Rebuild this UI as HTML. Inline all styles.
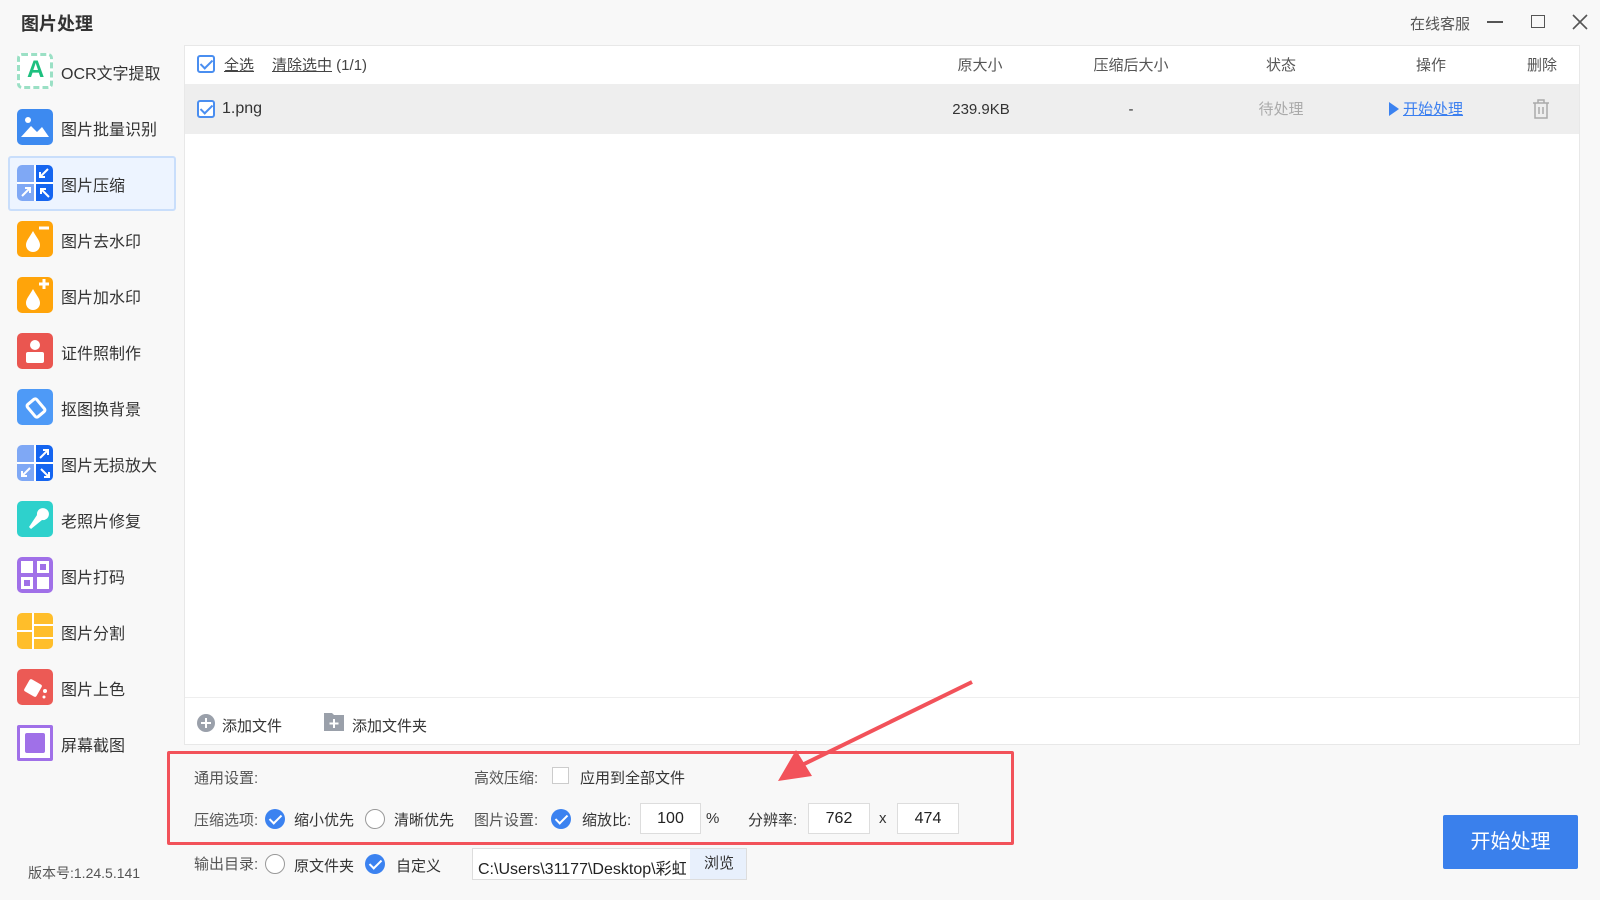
<!DOCTYPE html>
<html><head><meta charset="utf-8"><style>
*{margin:0;padding:0;box-sizing:border-box}
body{width:1600px;height:900px;background:#f8f8f8;font-family:"Liberation Sans","Noto Sans CJK SC",sans-serif;color:#333;position:relative;overflow:hidden}
.a{position:absolute;white-space:nowrap}
.title{left:21px;top:10px;font-size:18px;font-weight:bold;color:#333}
.nav{left:8px;width:168px;height:55px}
.nav .ic{position:absolute;left:9px;top:9px;width:36px;height:36px;border-radius:5px;overflow:hidden}
.nav span{position:absolute;left:53px;top:16px;font-size:16px;color:#333}
.sel{background:#edf4ff;border:2px solid #c9defb;border-radius:3px}
.panel{left:184px;top:45px;width:1396px;height:700px;background:#fff;border:1px solid #e8e8e8}
.hd{font-size:15px;color:#555;top:54px;transform:translateX(-50%)}
.row{left:185px;top:84px;width:1394px;height:50px;background:#eeeeee}
.cb{width:18px;height:18px;border:2px solid #4a8ef0;border-radius:3px;background:#fff}
.cb:after{content:"";position:absolute;left:4px;top:0px;width:5px;height:10px;border:solid #4a8ef0;border-width:0 2px 2px 0;transform:rotate(45deg)}
.rc{width:20px;height:20px;border-radius:50%;background:#3b82f0}
.rc:after{content:"";position:absolute;left:7px;top:3px;width:5px;height:10px;border:solid #fff;border-width:0 2px 2px 0;transform:rotate(45deg)}
.ro{width:20px;height:20px;border-radius:50%;border:1.5px solid #999;background:#fff}
.s{font-size:15px;color:#555}
.t{font-size:15px;color:#333}
.inp{height:31px;border:1px solid #ddd;background:#fff;font-size:16px;text-align:center;line-height:29px;color:#222}
</style></head><body>
<div class="a title">图片处理</div>
<div class="a" style="left:1410px;top:13px;font-size:15px;color:#555">在线客服</div>
<div class="a" style="left:1487px;top:21px;width:16px;height:2px;background:#555"></div>
<div class="a" style="left:1531px;top:15px;width:14px;height:13px;border:1.5px solid #555"></div>
<svg class="a" style="left:1571px;top:13px" width="18" height="18"><path d="M2 2L16 16M16 2L2 16" stroke="#555" stroke-width="1.6"/></svg>

<div class="a nav" style="top:44px"><div class="ic" style="border:3px dashed #9be0c5;background:#fff"></div><div class="a" style="left:19px;top:12px;font-size:24px;font-weight:bold;color:#1ec07f">A</div><span>OCR文字提取</span></div>
<div class="a nav" style="top:100px"><div class="ic" style="background:#3d8af0"><svg width="36" height="36"><path d="M4 28L14 17L20 23L25 18L32 28Z" fill="#fff"/><circle cx="11" cy="11" r="3" fill="#fff"/></svg></div><span>图片批量识别</span></div>
<div class="a nav sel" style="top:156px"><div class="ic" style="left:7px;top:7px;background:#fff"><svg width="36" height="36"><rect width="17" height="17" fill="#7fa8f5"/><rect x="19" width="17" height="17" fill="#1565f0"/><rect y="19" width="17" height="17" fill="#7fa8f5"/><rect x="19" y="19" width="17" height="17" fill="#1565f0"/><path d="M31 4L23 12M23 7V12H28M5 31L13 23M8 23H13V28M24 24L32 32M24 29V24H29" stroke="#fff" stroke-width="2" fill="none"/></svg></div><span style="left:51px;top:14px">图片压缩</span></div>
<div class="a nav" style="top:212px"><div class="ic" style="background:#ffa40a"><svg width="36" height="36"><path d="M16 10C12 17 9 20 9 24A7 7 0 0 0 23 24C23 20 20 17 16 10Z" fill="#fff"/><path d="M22 7H32" stroke="#fff" stroke-width="3"/></svg></div><span>图片去水印</span></div>
<div class="a nav" style="top:268px"><div class="ic" style="background:#ffa40a"><svg width="36" height="36"><path d="M16 12C12 19 9 22 9 26A7 7 0 0 0 23 26C23 22 20 19 16 12Z" fill="#fff"/><path d="M22 7H32M27 2V12" stroke="#fff" stroke-width="3"/></svg></div><span>图片加水印</span></div>
<div class="a nav" style="top:324px"><div class="ic" style="background:#ea5650"><svg width="36" height="36"><circle cx="18" cy="12" r="5" fill="#fff"/><rect x="9" y="19" width="18" height="11" rx="2" fill="#fff"/></svg></div><span>证件照制作</span></div>
<div class="a nav" style="top:380px"><div class="ic" style="background:#4e9af7"><svg width="36" height="36"><rect x="13" y="11" width="12" height="16" rx="2" transform="rotate(-40 19 19)" fill="none" stroke="#fff" stroke-width="3"/></svg></div><span>抠图换背景</span></div>
<div class="a nav" style="top:436px"><div class="ic" style="background:#fff"><svg width="36" height="36"><rect width="17" height="17" fill="#7fa8f5"/><rect x="19" width="17" height="17" fill="#1565f0"/><rect y="19" width="17" height="17" fill="#7fa8f5"/><rect x="19" y="19" width="17" height="17" fill="#1565f0"/><path d="M23 13L31 5M26 5H31V10M13 23L5 31M5 26V31H10M24 24L32 32M27 32H32V27" stroke="#fff" stroke-width="2" fill="none"/></svg></div><span>图片无损放大</span></div>
<div class="a nav" style="top:492px"><div class="ic" style="background:#2ed1cc"><svg width="36" height="36"><path d="M12 26L20 14A6 6 0 1 1 25 19L14 28Z" fill="#fff"/></svg></div><span>老照片修复</span></div>
<div class="a nav" style="top:548px"><div class="ic" style="background:#a070e8"><svg width="36" height="36"><rect x="4" y="4" width="12" height="12" fill="#fff"/><rect x="20" y="20" width="12" height="12" fill="#fff"/><rect x="20" y="4" width="12" height="12" fill="#fff"/><rect x="4" y="20" width="12" height="12" fill="#fff"/><rect x="23" y="7" width="6" height="6" fill="#a070e8"/><rect x="7" y="23" width="6" height="6" fill="#a070e8"/></svg></div><span>图片打码</span></div>
<div class="a nav" style="top:604px"><div class="ic" style="background:#ffbe2a"><svg width="36" height="36"><path d="M16 0V36M0 18H16M16 12H36M16 25H36" stroke="#fff" stroke-width="2"/></svg></div><span>图片分割</span></div>
<div class="a nav" style="top:660px"><div class="ic" style="background:#ec5a55"><svg width="36" height="36"><rect x="9" y="12" width="14" height="14" rx="2" transform="rotate(30 16 19)" fill="#fff"/><circle cx="28" cy="22" r="2" fill="#fff"/><circle cx="27" cy="28" r="1.5" fill="#fff"/></svg></div><span>图片上色</span></div>
<div class="a nav" style="top:716px"><div class="ic" style="border:3px solid #a070e8;background:#fff;border-radius:2px"></div><div class="a" style="left:17px;top:17px;width:20px;height:20px;background:#a070e8;border-radius:2px"></div><span>屏幕截图</span></div>
<div class="a" style="left:28px;top:863px;font-size:14px;color:#555">版本号:1.24.5.141</div>

<div class="a panel"></div>
<div class="a cb" style="left:197px;top:55px"></div>
<div class="a" style="left:224px;top:54px;font-size:15px;color:#444;text-decoration:underline">全选</div>
<div class="a" style="left:272px;top:54px;font-size:15px;color:#444"><u>清除选中</u> (1/1)</div>
<div class="a hd" style="left:980px">原大小</div>
<div class="a hd" style="left:1131px">压缩后大小</div>
<div class="a hd" style="left:1281px">状态</div>
<div class="a hd" style="left:1431px">操作</div>
<div class="a hd" style="left:1542px">删除</div>
<div class="a row"></div>
<div class="a cb" style="left:197px;top:100px"></div>
<div class="a" style="left:222px;top:99px;font-size:16px;color:#333;line-height:20px">1.png</div>
<div class="a" style="left:981px;top:100px;font-size:15px;line-height:20px;transform:translateX(-50%)">239.9KB</div>
<div class="a" style="left:1131px;top:100px;font-size:15px;line-height:20px;transform:translateX(-50%)">-</div>
<div class="a" style="left:1281px;top:100px;font-size:15px;line-height:20px;color:#aaa;transform:translateX(-50%)">待处理</div>
<svg class="a" style="left:1389px;top:102px" width="10" height="14"><path d="M0 0L10 7L0 14Z" fill="#3b82f0"/></svg>
<div class="a" style="left:1403px;top:100px;font-size:15px;line-height:20px;color:#3b7ff0;text-decoration:underline">开始处理</div>
<svg class="a" style="left:1532px;top:99px" width="18" height="20"><path d="M1 4H17M6 4V1H12V4M3 4V19H15V4M7 8V15M11 8V15" stroke="#aaa" fill="none" stroke-width="1.5"/></svg>
<div class="a" style="left:185px;top:697px;width:1394px;height:1px;background:#eee"></div>
<svg class="a" style="left:197px;top:714px" width="18" height="18"><circle cx="9" cy="9" r="9" fill="#9aa0aa"/><path d="M9 4V14M4 9H14" stroke="#fff" stroke-width="2"/></svg>
<div class="a" style="left:222px;top:715px;font-size:15px">添加文件</div>
<svg class="a" style="left:324px;top:713px" width="20" height="18"><path d="M0 0H8L10 2H20V18H0Z" fill="#9aa0aa"/><path d="M10 6V15M5.5 10.5H14.5" stroke="#fff" stroke-width="2"/></svg>
<div class="a" style="left:352px;top:715px;font-size:15px">添加文件夹</div>

<div class="a" style="left:167px;top:751px;width:847px;height:94px;border:3px solid #f2525a;border-radius:2px"></div>
<div class="a s" style="left:194px;top:767px">通用设置:</div>
<div class="a s" style="left:474px;top:767px">高效压缩:</div>
<div class="a" style="left:552px;top:767px;width:17px;height:17px;border:1px solid #ccc;background:#fff"></div>
<div class="a t" style="left:580px;top:767px">应用到全部文件</div>
<div class="a s" style="left:194px;top:809px">压缩选项:</div>
<div class="a rc" style="left:265px;top:809px"></div>
<div class="a t" style="left:294px;top:809px">缩小优先</div>
<div class="a ro" style="left:365px;top:809px"></div>
<div class="a t" style="left:394px;top:809px">清晰优先</div>
<div class="a s" style="left:474px;top:809px">图片设置:</div>
<div class="a rc" style="left:551px;top:809px"></div>
<div class="a t" style="left:582px;top:809px">缩放比:</div>
<div class="a inp" style="left:640px;top:803px;width:61px">100</div>
<div class="a t" style="left:706px;top:810px">%</div>
<div class="a t" style="left:748px;top:809px">分辨率:</div>
<div class="a inp" style="left:808px;top:803px;width:62px">762</div>
<div class="a t" style="left:879px;top:810px">x</div>
<div class="a inp" style="left:897px;top:803px;width:62px">474</div>

<div class="a s" style="left:194px;top:853px">输出目录:</div>
<div class="a ro" style="left:265px;top:854px"></div>
<div class="a t" style="left:294px;top:855px">原文件夹</div>
<div class="a rc" style="left:365px;top:854px"></div>
<div class="a t" style="left:396px;top:855px">自定义</div>
<div class="a" style="left:472px;top:848px;width:275px;height:32px;border:1px solid #ddd;background:#fff;overflow:hidden"><div style="position:absolute;left:5px;top:6px;font-size:16px;color:#222;width:208px;overflow:hidden;white-space:nowrap">C:\Users\31177\Desktop\彩虹</div><div style="position:absolute;left:217px;top:0;width:58px;height:30px;background:#e8f0fc;font-size:15px;text-align:center;line-height:30px">浏览</div></div>

<div class="a" style="left:1443px;top:815px;width:135px;height:54px;background:#3a80ec;border-radius:2px;color:#fff;font-size:20px;text-align:center;line-height:54px">开始处理</div>

<svg class="a" style="left:0;top:0" width="1600" height="900"><path d="M972 682L800 766" stroke="#f2525a" stroke-width="4"/><path d="M778 781L796 750L812 776Z" fill="#f2525a"/></svg>
</body></html>
